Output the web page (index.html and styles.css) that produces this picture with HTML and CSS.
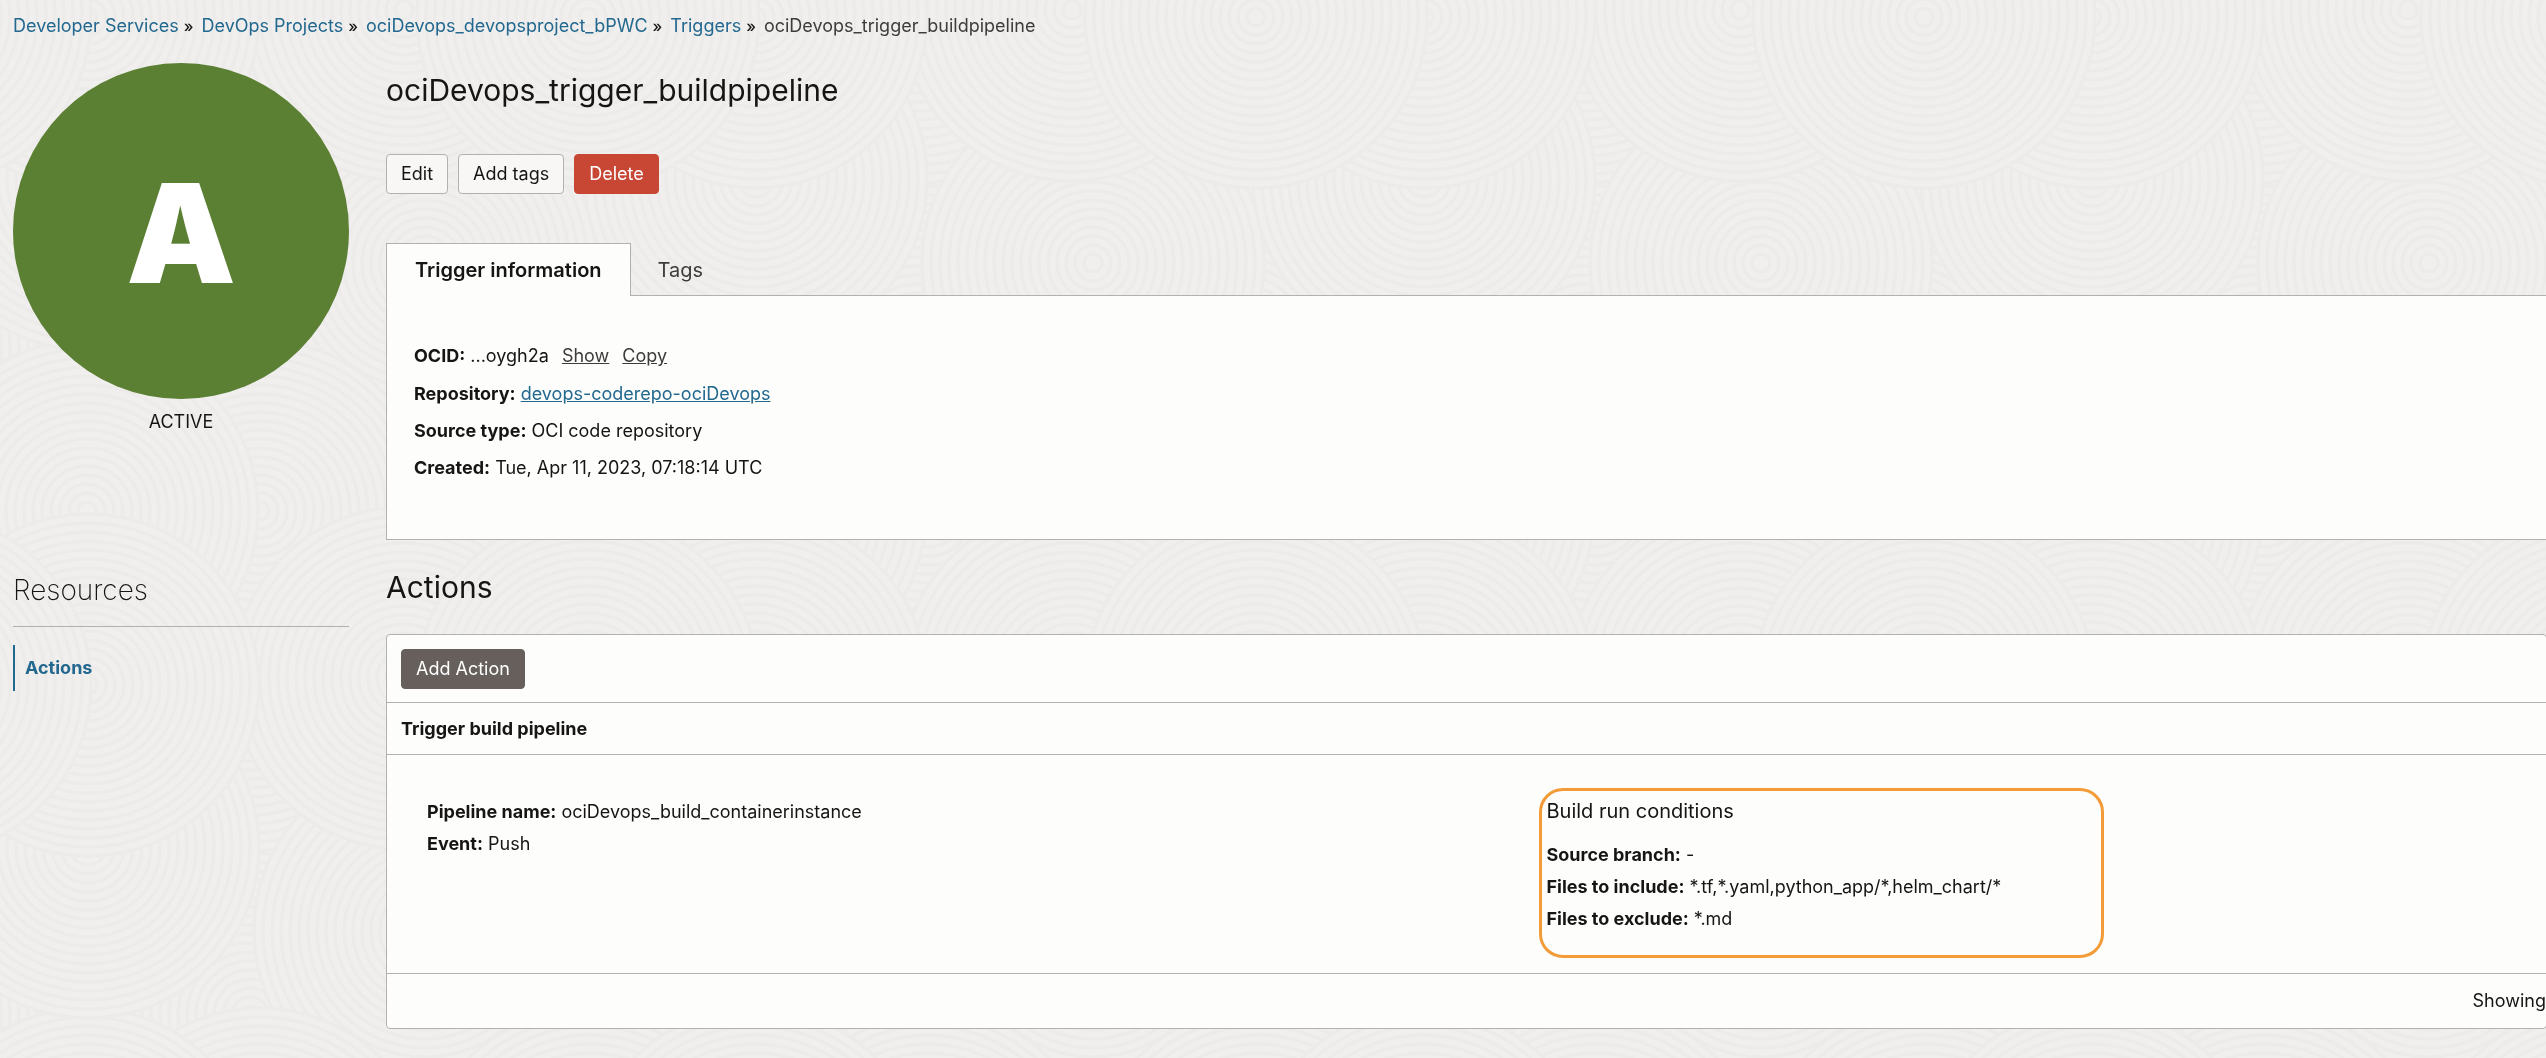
FILE: index.html
```html
<!DOCTYPE html>
<html lang="en">
<head>
<meta charset="utf-8">
<title>ociDevops_trigger_buildpipeline</title>
<meta name="viewport" content="width=device-width, initial-scale=1">
<link rel="stylesheet" href="styles.css">
</head>
<body>
<svg class="backdrop" aria-hidden="true">
  <defs>
    <g id="rings">
      <circle class="disc" r="171"/>
      <circle r="162"/><circle r="153"/><circle r="144"/><circle r="135"/><circle r="126"/><circle r="117"/>
      <circle r="108"/><circle r="99"/><circle r="90"/><circle r="81"/><circle r="72"/><circle r="63"/>
      <circle r="54"/><circle r="45"/><circle r="36"/><circle r="27"/><circle r="18"/><circle r="9"/>
    </g>
    <pattern id="swirls" width="668" height="668" patternUnits="userSpaceOnUse">
      <g class="swirl">
        <use href="#rings" x="250" y="347"/>
        <use href="#rings" x="570" y="347"/><use href="#rings" x="-98" y="347"/>
        <use href="#rings" x="250" y="680"/><use href="#rings" x="250" y="12"/>
        <use href="#rings" x="425" y="263"/>
        <use href="#rings" x="425" y="595"/><use href="#rings" x="425" y="-73"/>
        <use href="#rings" x="260" y="511"/>
        <use href="#rings" x="590" y="511"/><use href="#rings" x="-78" y="511"/>
        <use href="#rings" x="87" y="511"/><use href="#rings" x="755" y="511"/>
        <use href="#rings" x="88" y="179"/><use href="#rings" x="756" y="179"/>
        <use href="#rings" x="404" y="10"/><use href="#rings" x="404" y="678"/>
        <use href="#rings" x="88" y="17"/><use href="#rings" x="756" y="17"/><use href="#rings" x="88" y="685"/><use href="#rings" x="756" y="685"/>
        <use href="#rings" x="588" y="17"/><use href="#rings" x="588" y="685"/><use href="#rings" x="-80" y="17"/><use href="#rings" x="-80" y="685"/>
      </g>
    </pattern>
  </defs>
  <rect width="100%" height="100%" fill="url(#swirls)"/>
</svg>

<div class="page">
  <nav class="breadcrumb" aria-label="Breadcrumb">
    <a href="#">Developer Services</a><span class="sep">»</span>
    <a href="#">DevOps Projects</a><span class="sep">»</span>
    <a href="#">ociDevops_devopsproject_bPWC</a><span class="sep">»</span>
    <a href="#">Triggers</a><span class="sep">»</span>
    <span>ociDevops_trigger_buildpipeline</span>
  </nav>

  <div class="layout">
    <aside class="status">
      <div class="badge">A</div>
      <p class="state">ACTIVE</p>
    </aside>

    <main class="details">
      <h1>ociDevops_trigger_buildpipeline</h1>
      <div class="toolbar">
        <button type="button" class="btn">Edit</button>
        <button type="button" class="btn">Add tags</button>
        <button type="button" class="btn btn-danger">Delete</button>
      </div>
      <div class="tabs" role="tablist">
        <button type="button" class="tab tab-active" role="tab" aria-selected="true">Trigger information</button>
        <button type="button" class="tab" role="tab" aria-selected="false">Tags</button>
      </div>
      <section class="panel info">
        <p class="ocid"><strong>OCID:</strong> ...oygh2a <a class="quiet" href="#">Show</a> <a class="quiet" href="#">Copy</a></p>
        <p><strong>Repository:</strong> <a class="underlined" href="#">devops-coderepo-ociDevops</a></p>
        <p><strong>Source type:</strong> OCI code repository</p>
        <p><strong>Created:</strong> Tue, Apr 11, 2023, 07:18:14 UTC</p>
      </section>
    </main>

    <aside class="resources">
      <h2>Resources</h2>
      <a class="resource-link" href="#">Actions</a>
    </aside>

    <section class="actions">
      <h2>Actions</h2>
      <div class="panel list">
        <div class="list-tools">
          <button type="button" class="btn btn-dark">Add Action</button>
        </div>
        <h3 class="list-head">Trigger build pipeline</h3>
        <div class="list-body">
          <div class="facts">
            <p><strong>Pipeline name:</strong> ociDevops_build_containerinstance</p>
            <p><strong>Event:</strong> Push</p>
          </div>
          <div class="facts conditions">
            <h4>Build run conditions</h4>
            <p><strong>Source branch:</strong> -</p>
            <p><strong>Files to include:</strong> *.tf,*.yaml,python_app/*,helm_chart/*</p>
            <p><strong>Files to exclude:</strong> *.md</p>
          </div>
        </div>
        <div class="list-foot">Showing</div>
      </div>
    </section>
  </div>
</div>
</body>
</html>
```
FILE: styles.css
```css
* {
  box-sizing: border-box;
}

body {
  margin: 0;
  background: #f0efed;
  color: #161513;
  font-family: Inter, "Liberation Sans", sans-serif;
  font-size: 18px;
  line-height: 24px;
}

h1, h2, h3, h4, p {
  margin: 0;
}

a {
  color: #22688f;
  text-decoration: none;
}

strong {
  font-weight: 700;
}

/* Decorative pattern behind the whole page */
.backdrop {
  position: fixed;
  inset: 0;
  width: 100%;
  height: 100%;
  z-index: -1;
}

.swirl {
  fill: none;
  stroke: #ecebe9;
  stroke-width: 3;
}

.disc {
  fill: #f0efed;
}

.page {
  padding: 14px 0 28px 13px;
  overflow-x: hidden;
}

.breadcrumb {
  display: flex;
  color: #3e3c3a;
}

.sep {
  margin: 0 8px 0 5px;
  color: #161513;
  font-size: 16px;
  font-weight: 500;
}

.layout {
  display: grid;
  grid-template-columns: 336px minmax(0, 1fr);
  column-gap: 37px;
  margin-right: -1px;
}

/* Status column */
.status {
  padding-top: 25px;
  text-align: center;
}

.badge {
  aspect-ratio: 1;
  display: flex;
  align-items: center;
  justify-content: center;
  padding-top: 4px;
  border-radius: 50%;
  background: #5b8034;
  color: #fff;
  font-size: 138px;
  font-weight: 900;
}

.state {
  padding-top: 11px;
}

/* Trigger details */
h1,
h2 {
  font-size: 30px;
  font-weight: 400;
  line-height: 40px;
}

.details {
  padding-top: 32px;
}

.toolbar {
  display: flex;
  gap: 10px;
  padding: 44px 0 49px;
}

.btn {
  height: 40px;
  padding: 0 14px;
  border: 1px solid #b3b0ae;
  border-radius: 4px;
  background: #f8f7f5;
  color: #161513;
  font: inherit;
}

.btn-danger {
  border-color: #c74634;
  background: #c74634;
  color: #fff;
}

.btn-dark {
  border-color: #665f5b;
  background: #665f5b;
  color: #fff;
}

.tabs {
  display: flex;
}

.tab {
  height: 52px;
  padding: 0 26px;
  border: 1px solid transparent;
  border-bottom: 0;
  background: none;
  color: #3e3c3a;
  font: inherit;
  font-size: 20px;
}

.tab-active {
  position: relative;
  height: 53px;
  margin-bottom: -1px;
  padding: 0 28px;
  border-color: #b3b0ae;
  background: #fdfdfb;
  color: #161513;
  font-weight: 600;
}

.panel {
  border: 1px solid #b3b0ae;
  background: #fdfdfb;
}

.info {
  display: flex;
  flex-direction: column;
  gap: 13px;
  padding: 46px 27px 59px;
}

.ocid {
  line-height: 27px;
}

.quiet {
  margin-left: 8px;
  color: #3e3c3a;
  text-decoration: underline;
}

.underlined {
  text-decoration: underline;
}

/* Resources */
.resources {
  padding-top: 30px;
}

.resources h2 {
  padding-bottom: 16px;
  border-bottom: 1px solid #b3b0ae;
  font-size: 28px;
  font-weight: 200;
}

.resource-link {
  display: block;
  margin-top: 18px;
  padding: 11px 10px;
  border-left: 2px solid #22688f;
  font-weight: 700;
}

/* Actions */
.actions {
  padding-top: 27px;
}

.list {
  margin-top: 27px;
  border-radius: 4px;
}

.list-tools {
  padding: 14px 14px 13px;
}

.list-head {
  padding: 14px;
  border: solid #b3b0ae;
  border-width: 1px 0;
  font-size: 18px;
  font-weight: 700;
  line-height: 23px;
}

.list-body {
  display: grid;
  grid-template-columns: 112fr 100fr;
  padding: 33px 0 15px 40px;
}

.facts {
  display: flex;
  flex-direction: column;
  gap: 8px;
  padding-top: 12px;
}

.conditions {
  max-width: 565px;
  margin-left: -7px;
  padding: 8px 4px 24px;
  border: 3px solid #f29b38;
  border-radius: 24px;
}

.conditions h4 {
  padding-bottom: 12px;
  font-size: 20px;
  font-weight: 400;
}

.list-foot {
  padding: 15px 0;
  border-top: 1px solid #b3b0ae;
  text-align: right;
}
```
